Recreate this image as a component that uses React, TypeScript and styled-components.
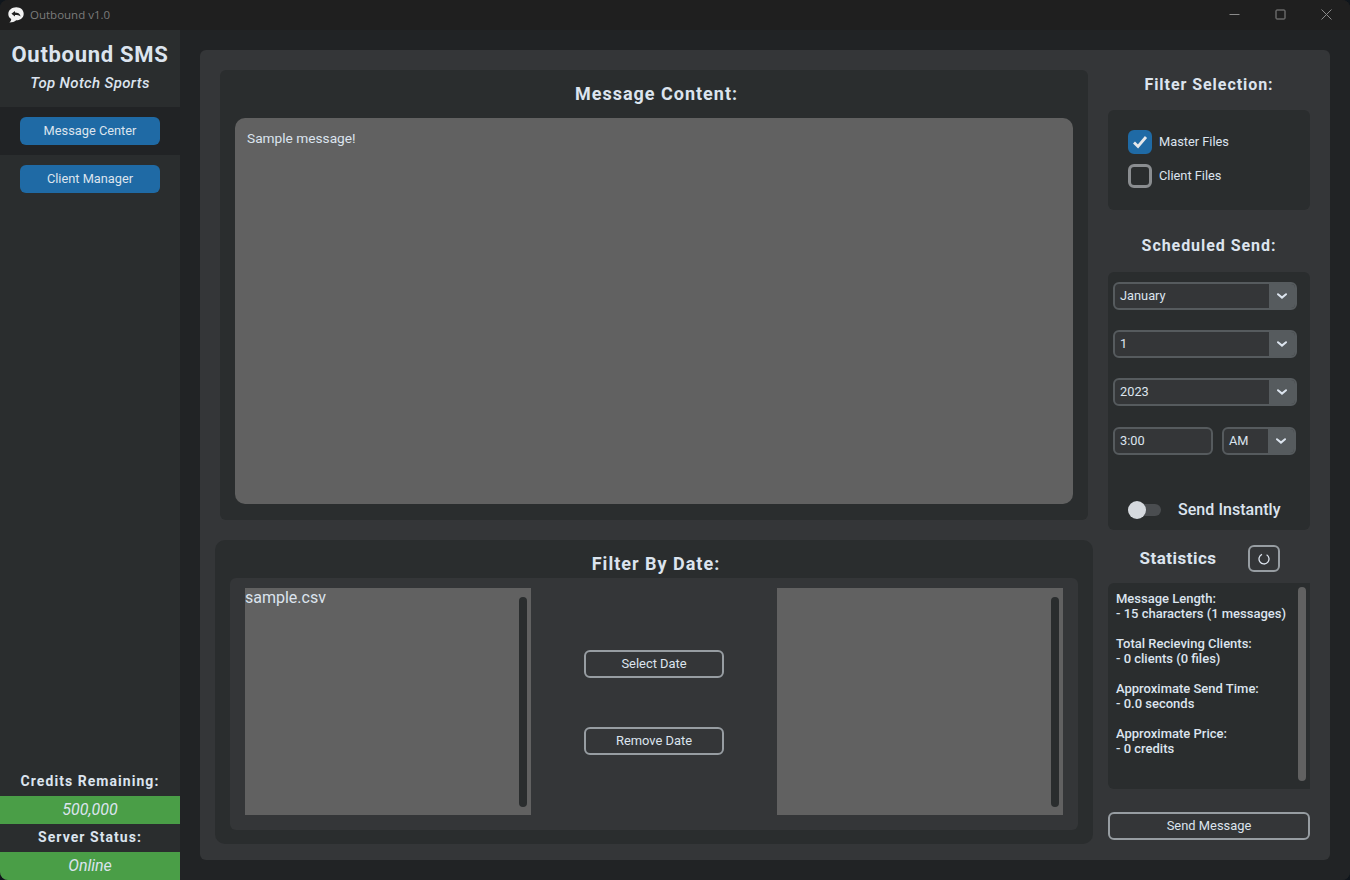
import React from 'react';
import styled, { createGlobalStyle } from 'styled-components';

const GlobalStyle = createGlobalStyle`
  html, body {
    margin: 0;
    padding: 0;
    background: #10161c;
  }
  * {
    box-sizing: border-box;
  }
`;

const textColor = '#dce4ee';
const frameDark = '#2a2d2e';
const frameLight = '#343638';
const boxGray = '#616161';
const borderGray = '#979da2';
const comboGray = '#565b5e';
const blue = '#1f6aa5';
const green = '#4a9e47';

const StatLines = [
  ['Message Length:', '- 15 characters (1 messages)'],
  ['Total Recieving Clients:', '- 0 clients (0 files)'],
  ['Approximate Send Time:', '- 0.0 seconds'],
  ['Approximate Price:', '- 0 credits'],
];

const Chevron = () => (
  <svg width="10" height="6" viewBox="0 0 10 6" fill="none">
    <path d="M1 1.2 L5 4.6 L9 1.2" stroke="#dce4ee" strokeWidth="2" strokeLinecap="round" />
  </svg>
);

const Combo = ({ value, width }: { value: string; width: number }) => (
  <ComboBox $width={width}>
    <ComboValue>{value}</ComboValue>
    <ComboArrow>
      <Chevron />
    </ComboArrow>
  </ComboBox>
);

const App = () => {
  return (
    <Window>
      <GlobalStyle />
      <TitleBar>
        <svg width="16" height="16" viewBox="0 0 16 16">
          <path
            d="M8.3 0.3 C12.6 0.3 15.7 3.1 15.7 6.8 C15.7 10.8 12.4 13.4 8.2 13.3 C6.6 14.6 4.2 15.6 1.4 15.6 C2.6 14.6 3.2 13.4 3.2 12 C1.3 10.8 0.3 9 0.3 6.9 C0.3 3.1 3.9 0.3 8.3 0.3 Z"
            fill="#f2f2f2"
          />
          <path d="M3.4 6.7 L7 3.9 L7 5.6 C9.8 5.6 11.8 6.6 12.7 9.4 C11.2 8.3 9.4 8 7 8 L7 9.5 Z" fill="#1f1f1f" />
        </svg>
        <WindowTitle>Outbound v1.0</WindowTitle>
        <WindowControls>
          <svg width="11" height="11" viewBox="0 0 11 11">
            <path d="M0.5 5.5 H10.5" stroke="#8a8a8a" strokeWidth="1" />
          </svg>
          <svg width="11" height="11" viewBox="0 0 11 11" fill="none">
            <rect x="1" y="1" width="9" height="9" rx="0.8" stroke="#8a8a8a" strokeWidth="1" />
          </svg>
          <svg width="11" height="11" viewBox="0 0 11 11">
            <path d="M0.5 0.5 L10.5 10.5 M10.5 0.5 L0.5 10.5" stroke="#8a8a8a" strokeWidth="1" />
          </svg>
        </WindowControls>
      </TitleBar>

      <Body>
        <Sidebar>
          <Brand>
            <BrandName>Outbound SMS</BrandName>
            <BrandSub>Top Notch Sports</BrandSub>
          </Brand>
          <NavSlot $active>
            <NavButton>Message Center</NavButton>
          </NavSlot>
          <NavSlot>
            <NavButton>Client Manager</NavButton>
          </NavSlot>
          <SideFooter>
            <FooterLabel>Credits Remaining:</FooterLabel>
            <FooterValue>500,000</FooterValue>
            <FooterLabel>Server Status:</FooterLabel>
            <FooterValue>Online</FooterValue>
          </SideFooter>
        </Sidebar>

        <Content>
          <Panel>
            <LeftColumn>
              <MessageFrame>
                <FrameTitle>Message Content:</FrameTitle>
                <MessageBox>Sample message!</MessageBox>
              </MessageFrame>
              <DateFrame>
                <DateTitle>Filter By Date:</DateTitle>
                <DateInner>
                  <FileList>
                    sample.csv
                    <ListScroll />
                  </FileList>
                  <DateActions>
                    <OutlineButton $width={140}>Select Date</OutlineButton>
                    <OutlineButton $width={140}>Remove Date</OutlineButton>
                  </DateActions>
                  <FileList>
                    <ListScroll />
                  </FileList>
                </DateInner>
              </DateFrame>
            </LeftColumn>

            <RightColumn>
              <FilterTitle>Filter Selection:</FilterTitle>
              <FilterFrame>
                <CheckRow>
                  <CheckBox $checked>
                    <svg width="16" height="14" viewBox="0 0 16 14" fill="none">
                      <path d="M2 7.5 L6 11.5 L14 2" stroke="#e4e7ea" strokeWidth="2.8" />
                    </svg>
                  </CheckBox>
                  <CheckLabel>Master Files</CheckLabel>
                </CheckRow>
                <CheckRow>
                  <CheckBox />
                  <CheckLabel>Client Files</CheckLabel>
                </CheckRow>
              </FilterFrame>

              <ScheduleTitle>Scheduled Send:</ScheduleTitle>
              <ScheduleFrame>
                <Combo value="January" width={184} />
                <Combo value="1" width={184} />
                <Combo value="2023" width={184} />
                <TimeRow>
                  <TimeInput>3:00</TimeInput>
                  <Combo value="AM" width={74} />
                </TimeRow>
                <ToggleRow>
                  <Toggle>
                    <ToggleThumb />
                  </Toggle>
                  Send Instantly
                </ToggleRow>
              </ScheduleFrame>

              <StatsHeader>
                <StatsTitle>Statistics</StatsTitle>
                <RefreshButton>
                  <svg width="12" height="12" viewBox="0 0 12 12" fill="none">
                    <path d="M4 1.4 A5 5 0 1 0 8.6 1.7" stroke="#dce4ee" strokeWidth="1.3" />
                  </svg>
                </RefreshButton>
              </StatsHeader>
              <StatsFrame>
                {StatLines.map(([label, value]) => (
                  <StatBlock key={label}>
                    <div>{label}</div>
                    <div>{value}</div>
                  </StatBlock>
                ))}
                <StatsScroll />
              </StatsFrame>
              <SendButton>Send Message</SendButton>
            </RightColumn>
          </Panel>
        </Content>
      </Body>
    </Window>
  );
};

//Styled Components

const Window = styled.div`
  width: 1350px;
  height: 880px;
  display: flex;
  flex-direction: column;
  overflow: hidden;
  border-radius: 8px;
  background: #212325;
  color: ${textColor};
  font-family: Roboto, 'Liberation Sans', sans-serif;
`;

const TitleBar = styled.div`
  height: 30px;
  flex: none;
  display: flex;
  align-items: center;
  padding: 0 0 1px 8px;
  background: #1f1f1f;
`;

const WindowTitle = styled.span`
  margin-left: 6px;
  font-family: 'Open Sans', 'Noto Sans', sans-serif;
  font-size: 11.5px;
  color: #7c7c7c;
`;

const WindowControls = styled.div`
  margin-left: auto;
  display: flex;
  align-items: center;
  gap: 35px;
  padding-right: 18px;
`;

const Body = styled.div`
  flex: 1;
  display: flex;
  min-height: 0;
`;

const Sidebar = styled.div`
  width: 180px;
  flex: none;
  display: flex;
  flex-direction: column;
  background: ${frameDark};
`;

const Brand = styled.div`
  height: 77px;
  display: flex;
  flex-direction: column;
  align-items: center;
  padding-top: 12px;
`;

const BrandName = styled.div`
  font-size: 22px;
  line-height: 26px;
  font-weight: 700;
  letter-spacing: 0.7px;
`;

const BrandSub = styled.div`
  margin-top: 6px;
  font-size: 15px;
  line-height: 18px;
  font-weight: 500;
  font-style: italic;
  letter-spacing: 0.35px;
`;

const NavSlot = styled.div<{ $active?: boolean }>`
  height: 48px;
  padding: 10px 20px;
  background: ${(props) => (props.$active ? '#212325' : 'transparent')};
`;

const NavButton = styled.div`
  height: 28px;
  display: flex;
  align-items: center;
  justify-content: center;
  padding-bottom: 2px;
  border-radius: 6px;
  background: ${blue};
  font-size: 12.8px;
`;

const SideFooter = styled.div`
  margin-top: auto;
  display: flex;
  flex-direction: column;
`;

const FooterLabel = styled.div`
  height: 28px;
  display: flex;
  align-items: center;
  justify-content: center;
  padding-bottom: 2px;
  font-size: 14px;
  font-weight: 700;
  letter-spacing: 1.05px;
`;

const FooterValue = styled.div`
  height: 28px;
  display: flex;
  align-items: center;
  justify-content: center;
  padding-bottom: 2px;
  background: ${green};
  font-size: 16px;
  font-style: italic;
`;

const Content = styled.div`
  flex: 1;
  padding: 20px;
  background: #212325;
`;

const Panel = styled.div`
  height: 810px;
  display: flex;
  padding-left: 15px;
  border-radius: 6px;
  background: ${frameLight};
`;

const LeftColumn = styled.div`
  width: 878px;
  flex: none;
  padding-top: 20px;
`;

const MessageFrame = styled.div`
  height: 450px;
  margin: 0 5px;
  padding: 14px 15px 0;
  border-radius: 6px;
  background: ${frameDark};
`;

const FrameTitle = styled.div`
  height: 20px;
  margin-bottom: 14px;
  padding-left: 5px;
  text-align: center;
  font-size: 18px;
  line-height: 20px;
  font-weight: 700;
  letter-spacing: 1px;
`;

const MessageBox = styled.div`
  height: 386px;
  padding: 12px 12px;
  border-radius: 10px;
  background: ${boxGray};
  font-size: 13.7px;
  line-height: 17px;
`;

const DateFrame = styled.div`
  height: 304px;
  margin-top: 20px;
  padding: 14px 15px 0;
  border-radius: 10px;
  background: ${frameDark};
`;

const DateTitle = styled(FrameTitle)`
  margin-bottom: 4px;
  padding-left: 4px;
`;

const DateInner = styled.div`
  height: 252px;
  display: flex;
  padding: 10px 15px 15px;
  border-radius: 6px;
  background: ${frameLight};
`;

const FileList = styled.div`
  position: relative;
  width: 286px;
  flex: none;
  background: ${boxGray};
  font-size: 16px;
  line-height: 19px;
`;

const ListScroll = styled.div`
  position: absolute;
  top: 9px;
  bottom: 8px;
  right: 4px;
  width: 8px;
  border-radius: 4px;
  background: ${frameDark};
`;

const DateActions = styled.div`
  flex: 1;
  display: flex;
  flex-direction: column;
  align-items: center;
  gap: 49px;
  padding-top: 62px;
`;

const OutlineButton = styled.div<{ $width?: number }>`
  width: ${(props) => (props.$width ? `${props.$width}px` : '100%')};
  height: 28px;
  flex: none;
  display: flex;
  align-items: center;
  justify-content: center;
  padding-bottom: 2px;
  border: 2px solid ${borderGray};
  border-radius: 6px;
  font-size: 12.9px;
`;

const RightColumn = styled.div`
  width: 202px;
  flex: none;
  margin-left: 15px;
`;

const FilterTitle = styled.div`
  height: 20px;
  margin: 25px 0 15px;
  text-align: center;
  font-size: 16px;
  line-height: 20px;
  font-weight: 700;
  letter-spacing: 0.95px;
`;

const FilterFrame = styled.div`
  height: 100px;
  display: flex;
  flex-direction: column;
  gap: 10px;
  padding: 20px;
  border-radius: 6px;
  background: ${frameDark};
`;

const CheckRow = styled.div`
  display: flex;
  align-items: center;
  gap: 7px;
`;

const CheckLabel = styled.span`
  padding-bottom: 2px;
  font-size: 12.8px;
`;

const CheckBox = styled.div<{ $checked?: boolean }>`
  width: 24px;
  height: 24px;
  display: flex;
  align-items: center;
  justify-content: center;
  border-radius: 6px;
  border: 3px solid ${(props) => (props.$checked ? blue : '#8a8d90')};
  background: ${(props) => (props.$checked ? blue : 'transparent')};
`;

const ScheduleTitle = styled(FilterTitle)`
  margin: 26px 0 16px;
`;

const ScheduleFrame = styled.div`
  height: 258px;
  display: flex;
  flex-direction: column;
  gap: 20px;
  padding: 10px 5px 0;
  border-radius: 6px;
  background: ${frameDark};
`;

const ComboBox = styled.div<{ $width: number }>`
  width: ${(props) => props.$width}px;
  height: 28px;
  flex: none;
  display: flex;
  overflow: hidden;
  border: 2px solid ${comboGray};
  border-radius: 6px;
  background: ${frameLight};
`;

const ComboValue = styled.div`
  flex: 1;
  padding-left: 5px;
  font-size: 12.8px;
  line-height: 24px;
`;

const ComboArrow = styled.div`
  width: 26px;
  display: flex;
  align-items: center;
  justify-content: center;
  background: ${comboGray};
`;

const TimeRow = styled.div`
  display: flex;
  gap: 9px;
  margin-top: 1px;
`;

const TimeInput = styled.div`
  width: 100px;
  height: 28px;
  padding-left: 5px;
  border: 2px solid ${comboGray};
  border-radius: 6px;
  background: ${frameLight};
  font-size: 12.8px;
  line-height: 24px;
`;

const ToggleRow = styled.div`
  display: flex;
  align-items: center;
  gap: 17px;
  margin-top: 25px;
  padding-left: 15px;
  font-size: 16px;
  font-weight: 500;
  letter-spacing: 0.05px;
`;

const Toggle = styled.div`
  position: relative;
  width: 33px;
  height: 12px;
  border-radius: 6px;
  background: #4a4d50;
`;

const ToggleThumb = styled.div`
  position: absolute;
  left: 0;
  top: -3px;
  width: 18px;
  height: 18px;
  border-radius: 50%;
  background: #d5d9de;
`;

const StatsHeader = styled.div`
  height: 27px;
  display: flex;
  align-items: center;
  margin: 15px 0 11px;
`;

const StatsTitle = styled.div`
  width: 140px;
  padding-bottom: 2px;
  text-align: center;
  font-size: 17px;
  font-weight: 700;
  letter-spacing: 0.5px;
`;

const RefreshButton = styled.div`
  width: 32px;
  height: 27px;
  display: flex;
  align-items: center;
  justify-content: center;
  border: 2px solid ${borderGray};
  border-radius: 6px;
`;

const StatsFrame = styled.div`
  position: relative;
  height: 206px;
  padding: 8px 8px 0;
  border-radius: 6px 0 0 6px;
  background: ${frameDark};
  font-size: 13px;
  font-weight: 500;
  line-height: 15px;
`;

const StatBlock = styled.div`
  margin-bottom: 15px;
`;

const StatsScroll = styled.div`
  position: absolute;
  top: 4px;
  right: 4px;
  width: 8px;
  height: 194px;
  border-radius: 4px;
  background: ${boxGray};
`;

const SendButton = styled(OutlineButton)`
  margin-top: 23px;
`;

export default App;
